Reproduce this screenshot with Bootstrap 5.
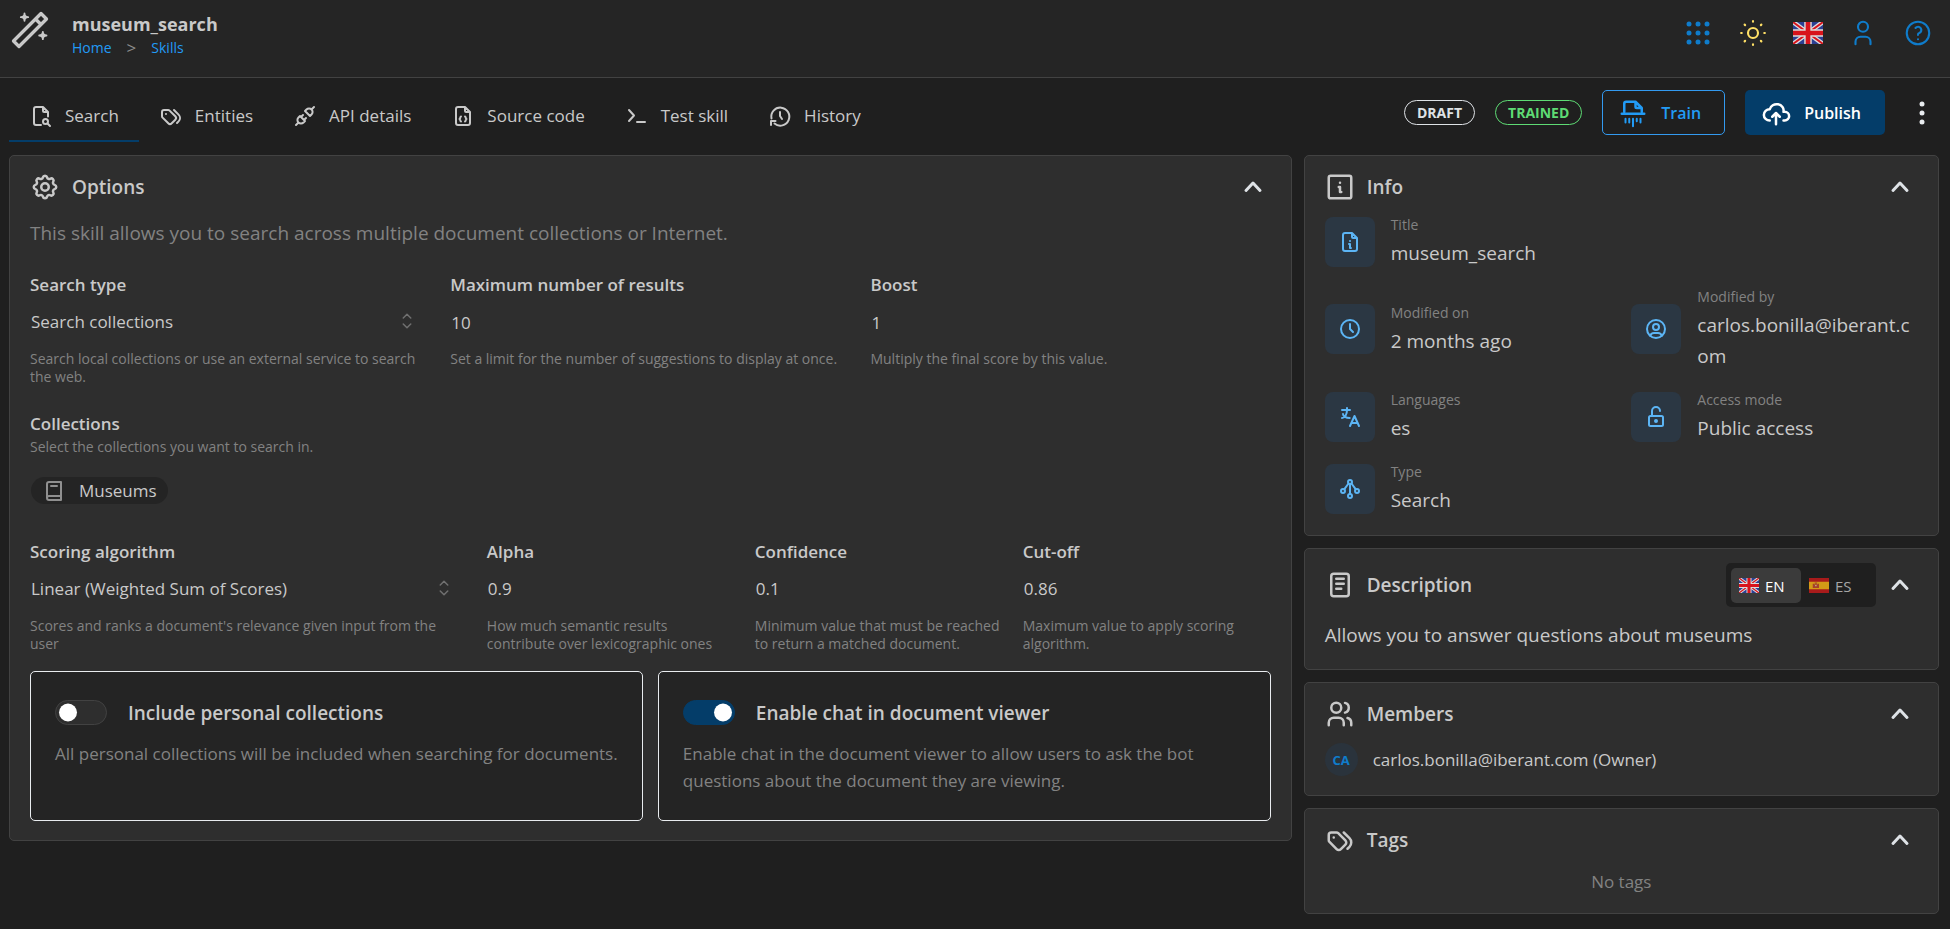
<!DOCTYPE html>
<html lang="en" data-bs-theme="dark">
<head>
<meta charset="utf-8">
<meta name="viewport" content="width=device-width, initial-scale=1">
<title>museum_search</title>
<link href="https://cdn.jsdelivr.net/npm/bootstrap@5.3.0/dist/css/bootstrap.min.css" rel="stylesheet">
<style>
:root { --text: #c9c9c9; --dim: #828282; --panel: #2e2e2e; --line: #424242; --deep: #242424; --navy: #043d69; --link: #229bf5; --blue: #0f7ccb; }
body { background: #1f1f1f; color: var(--text); font-family: "Open Sans", "Noto Sans", sans-serif; font-size: 17px; line-height: 24px; }
h1, h2, h3 { color: var(--text); }
.ico { width: 24px; height: 24px; fill: none; stroke: currentColor; stroke-width: 2; stroke-linecap: round; stroke-linejoin: round; flex: none; }
.ico-lg { width: 30px; height: 30px; }
.ico-app { width: 44px; height: 44px; stroke-width: 1.8; }
.plain { background: none; border: 0; padding: 0; color: inherit; line-height: 0; }
.topbar { background: #252525; border-bottom: 1px solid var(--line); height: 78px; padding: 8px 17px 0 8px; }
.topbar .app-name { font-size: 18px; font-weight: 700; line-height: 24px; margin: 4px 0 0; }
.crumbs { font-size: 14px; line-height: 24px; gap: 15px; }
.crumbs a { color: var(--link); text-decoration: none; }
.crumbs span { font-size: 17px; color: #8c8c8c; }
.top-actions { gap: 25px; color: var(--blue); height: 50px; }
.top-actions .ico { stroke-width: 1.7; }
.toolbar { padding: 12px 11px 12px 9px; min-height: 77px; }
.tab-link { display: flex; align-items: center; gap: 12px; height: 52px; padding: 2px 20px 0; color: var(--text); text-decoration: none; border-bottom: 2px solid transparent; font-size: 17px; }
.tab-link.active { border-color: var(--navy); }
.tab-link:hover { color: #fff; }
.actions { gap: 20px; }
.pill { border: 1px solid; border-radius: 13px; height: 25px; line-height: 23px; padding: 0 12px; font-size: 14px; font-weight: 700; }
.pill-draft { color: #dee2e6; }
.pill-ok { color: #5edb74; }
.act { height: 45px; border-radius: 5px; font-size: 16px; font-weight: 600; padding: 0 23px 0 15px; display: flex; align-items: center; gap: 13px; }
.act-train { color: var(--link); border: 1px solid #339af0; }
.act-publish { color: #fff; background: var(--navy); }
.content { padding: 0 11px 12px 9px; }
.content > .row { --bs-gutter-x: 12px; }
.panel { background: var(--panel); border: 1px solid var(--line); border-radius: 5px; padding: 16px 20px 19px; }
.panel + .panel { margin-top: 12px; }
.panel-head { height: 30px; gap: 12px; padding-right: 6px; }
.panel-head h2 { font-size: 19px; font-weight: 600; line-height: 30px; margin: 0; }
.panel-head .plain { color: #dee2e6; }
.panel-head .plain .ico { stroke-width: 3; }
.panel-tall { padding-top: 21px; }
.lede { font-size: 19px; line-height: 30px; color: var(--dim); margin: 16px 0 22px; }
.summary { font-size: 19px; line-height: 30px; margin: 20px 0 0; }
.fields { display: grid; gap: 20px; }
.fields-3 { grid-template-columns: repeat(3, 1fr); margin-bottom: 24px; }
.fields-4 { grid-template-columns: 437fr 248fr 248fr 248fr; margin: 32px 0 18px; }
.fields label { display: block; font-size: 17px; font-weight: 600; line-height: 30px; }
.group-title { font-size: 17px; font-weight: 600; line-height: 28px; margin: 0; }
.fields input, .fields select { appearance: none; display: block; width: 100%; height: 44px; background: none; border: 0; padding: 0 1px; color: var(--text); font-size: 17px; }
.fields option { background: var(--panel); }
.pick { position: relative; }
.pick .ico { position: absolute; right: 14px; top: 12px; width: 18px; height: 18px; color: #707070; pointer-events: none; }
.hint { font-size: 14px; line-height: 18px; color: var(--dim); margin: 6px 0 0; }
.chips { margin-top: 21px; line-height: 16px; }
.chip { display: inline-flex; align-items: center; gap: 13px; height: 27px; border-radius: 14px; background: var(--deep); padding: 0 11px; margin-left: 1px; }
.chip .ico { color: #909090; }
.opts { gap: 15px; }
.opt-box { background: var(--deep); border: 1px solid #e9ecef; border-radius: 5px; padding: 26px 16px 24px 24px; min-height: 150px; }
.opt-box .form-check { display: flex; align-items: center; gap: 21px; padding: 0; margin: 0; min-height: 30px; }
.opt-box .form-check-input { width: 52px; height: 25px; margin: 0; flex: none; background-color: var(--panel); border: 1px solid var(--line); background-size: 25px 25px; background-image: url("data:image/svg+xml,%3csvg xmlns='http://www.w3.org/2000/svg' viewBox='0 0 25 25'%3e%3ccircle cx='12' cy='12.5' r='9' fill='%23fff'/%3e%3c/svg%3e") !important; background-position: left center; }
.opt-box .form-check-input:checked { background-color: var(--navy); border-color: var(--navy); background-position: right -2px center; }
.opt-box .form-check-label { font-size: 19px; font-weight: 600; line-height: 30px; }
.opt-box p { color: var(--dim); font-size: 17px; line-height: 27px; margin: 12px 0 0; }
.facts { display: grid; grid-template-columns: 1fr 1fr; gap: 17px 20px; margin-top: 12px; }
.fact { display: flex; align-items: center; gap: 16px; min-width: 0; }
.fact-wide { grid-column: 1 / -1; }
.fact dt { font-weight: 400; font-size: 14px; line-height: 22px; margin-bottom: 2px; color: var(--dim); }
.fact dd { margin: 0; font-size: 19px; line-height: 31px; word-break: break-all; }
.tile { width: 50px; height: 50px; border-radius: 8px; background: #2b3743; color: #5cb5f5; display: flex; align-items: center; justify-content: center; flex: none; }
.seg { background: #1f1f1f; border-radius: 5px; padding: 5px; width: 150px; height: 44px; }
.seg label { display: flex; align-items: center; gap: 6px; width: 70px; height: 35px; padding-left: 8px; border-radius: 5px; font-size: 15px; line-height: 20px; color: #a6a6a6; }
.seg .btn-check:checked + label { background: #3b3b3b; color: #fff; }
.avatar { width: 33px; height: 33px; border-radius: 50%; background: #2a333c; color: #0f7ccb; font-size: 13px; font-weight: 700; display: flex; align-items: center; justify-content: center; }
.member { gap: 15px; margin-top: 14px; }
.no-tags { color: var(--dim); margin: 15px 0 0; }
</style>
</head>
<body>
<svg class="d-none" aria-hidden="true">
  <defs>
    <symbol id="wand" viewBox="0 0 24 24"><path d="M6 21l15-15-3-3-15 15 3 3M15 6l3 3"/><path fill="currentColor" stroke-width="1" d="M9 3a2 2 0 0 0 2 2 2 2 0 0 0-2 2 2 2 0 0 0-2-2 2 2 0 0 0 2-2M19 13a2 2 0 0 0 2 2 2 2 0 0 0-2 2 2 2 0 0 0-2-2 2 2 0 0 0 2-2"/></symbol>
    <symbol id="file-search" viewBox="0 0 24 24"><path d="M14 3v4a1 1 0 0 0 1 1h4M12 21H7a2 2 0 0 1-2-2V5a2 2 0 0 1 2-2h7l5 5v4.5M18.5 19.5L21 22"/><circle cx="16.5" cy="17.5" r="2.5"/></symbol>
    <symbol id="tags" viewBox="0 0 24 24"><path d="M3 8v4.172a2 2 0 0 0 .586 1.414l5.71 5.71a2.41 2.41 0 0 0 3.408 0l3.592-3.592a2.41 2.41 0 0 0 0-3.408l-5.71-5.71A2 2 0 0 0 9.172 6H5a2 2 0 0 0-2 2zM18 19l1.592-1.592a4.82 4.82 0 0 0 0-6.816L15 6M7 10h-.01"/></symbol>
    <symbol id="plug" viewBox="0 0 24 24"><path d="M7 12l5 5-1.500 1.500a3.536 3.536 0 1 1-5-5zM17 12l-5-5 1.500-1.500a3.536 3.536 0 1 1 5 5zM3 21l2.500-2.500M18.500 5.500L21 3M10 11l-2 2M13 14l-2 2"/></symbol>
    <symbol id="file-code" viewBox="0 0 24 24"><path d="M14 3v4a1 1 0 0 0 1 1h4M17 21H7a2 2 0 0 1-2-2V5a2 2 0 0 1 2-2h7l5 5v11a2 2 0 0 1-2 2zM10 12.500c-1 0-.5 2.500-1.500 2.500 1 0 .5 2.500 1.500 2.500M14 12.500c1 0 .5 2.500 1.500 2.500-1 0-.5 2.500-1.500 2.500"/></symbol>
    <symbol id="prompt" viewBox="0 0 24 24"><path d="M4 6l5 5.500-5 5.500M12 18h8"/></symbol>
    <symbol id="history" viewBox="0 0 24 24"><path d="M3.500 14.500A9 9 0 1 1 6.500 19.500M3 21v-4h4.500M12 8v4l2 3"/></symbol>
    <symbol id="sun" viewBox="0 0 24 24"><circle cx="12" cy="12" r="4"/><path d="M12 2.500v.5M12 21v.5M2.500 12H3M21 12h.5M5.300 5.300l.4.4M18.300 18.300l.4.4M5.300 18.700l.4-.4M18.300 5.700l.4-.4"/></symbol>
    <symbol id="user" viewBox="0 0 24 24"><circle cx="12" cy="7" r="4"/><path d="M6 21v-2a4 4 0 0 1 4-4h4a4 4 0 0 1 4 4v2"/></symbol>
    <symbol id="help" viewBox="0 0 24 24"><circle cx="12" cy="12" r="9"/><path d="M12 17v.01M12 13.500a1.500 1.500 0 0 1 1-1.500 2.600 2.600 0 1 0-3-4"/></symbol>
    <symbol id="gear" viewBox="0 0 24 24"><path d="M10.325 4.317c.426-1.756 2.924-1.756 3.350 0a1.724 1.724 0 0 0 2.573 1.066c1.543-.94 3.310.826 2.370 2.370a1.724 1.724 0 0 0 1.065 2.572c1.756.426 1.756 2.924 0 3.350a1.724 1.724 0 0 0-1.066 2.573c.94 1.543-.826 3.310-2.370 2.370a1.724 1.724 0 0 0-2.572 1.065c-.426 1.756-2.924 1.756-3.350 0a1.724 1.724 0 0 0-2.573-1.066c-1.543.94-3.310-.826-2.370-2.370a1.724 1.724 0 0 0-1.065-2.572c-1.756-.426-1.756-2.924 0-3.350a1.724 1.724 0 0 0 1.066-2.573c-.94-1.543.826-3.310 2.370-2.370 1 .608 2.296.07 2.572-1.065z"/><circle cx="12" cy="12" r="3"/></symbol>
    <symbol id="info" viewBox="0 0 24 24"><rect x="3" y="3" width="18" height="18" rx="1.500"/><path d="M12 8.500h.01M11 12h1v4h1"/></symbol>
    <symbol id="shredder" viewBox="0 0 24 24"><path d="M5 11V4.500A1.500 1.500 0 0 1 6.500 3H14l5 5v3M14 3v4a1 1 0 0 0 1 1h4M3 12.500h18"/><path stroke-width="1.600" d="M6 16.500v3M9 16.500v3M12 16.500v6M15 16.500v2M18 16.500v3"/></symbol>
    <symbol id="cloud-up" viewBox="0 0 24 24"><path d="M7 18a4.600 4.400 0 0 1 0-9 5 4.500 0 0 1 11 2h1a3.500 3.500 0 0 1 0 7h-1M9 15l3-3 3 3M12 12v9"/></symbol>
    <symbol id="up" viewBox="0 0 24 24"><path d="M5 15.500l7-7.500 7 7.500"/></symbol>
    <symbol id="updown" viewBox="0 0 24 24"><path d="M7 8l5-5 5 5M7 16l5 5 5-5"/></symbol>
    <symbol id="book" viewBox="0 0 24 24"><path d="M19 21H7a2 2 0 0 1-2-2V5a2 2 0 0 1 2-2h12v18M19 17H7a2 2 0 0 0-2 2M9 7h6"/></symbol>
    <symbol id="file-info" viewBox="0 0 24 24"><path d="M14 3v4a1 1 0 0 0 1 1h4M17 21H7a2 2 0 0 1-2-2V5a2 2 0 0 1 2-2h7l5 5v11a2 2 0 0 1-2 2zM11 14h1v4h1M12 11h.01"/></symbol>
    <symbol id="clock" viewBox="0 0 24 24"><circle cx="12" cy="12" r="9"/><path d="M12 7v5l3 3"/></symbol>
    <symbol id="user-circle" viewBox="0 0 24 24"><circle cx="12" cy="12" r="9"/><circle cx="12" cy="10" r="3"/><path d="M6.168 18.849A4 4 0 0 1 10 16h4a4 4 0 0 1 3.834 2.855"/></symbol>
    <symbol id="language" viewBox="0 0 24 24"><path d="M4 5h8M9 3v2c0 4.418-2.239 8-5 8M5 9c0 2.144 2.952 3.908 6.700 4M12 21l4.500-10L21 21M19.500 18h-6"/></symbol>
    <symbol id="lock-open" viewBox="0 0 24 24"><rect x="5" y="11" width="14" height="10" rx="1.500"/><circle cx="12" cy="16" r="1"/><path d="M8 11V6a4 4 0 0 1 8 0"/></symbol>
    <symbol id="nodes" viewBox="0 0 24 24"><circle cx="12" cy="5" r="2"/><circle cx="5" cy="14" r="2"/><circle cx="19" cy="14" r="2"/><circle cx="12" cy="19" r="2"/><path d="M12 7v10M10.500 6.500l-4.300 5.800M13.500 6.500l4.300 5.800"/></symbol>
    <symbol id="notes" viewBox="0 0 24 24"><rect x="5" y="3" width="14" height="18" rx="2"/><path d="M9 7h6M9 11h6M9 15h4"/></symbol>
    <symbol id="users" viewBox="0 0 24 24"><circle cx="9" cy="7" r="4"/><path d="M3 21v-2a4 4 0 0 1 4-4h4a4 4 0 0 1 4 4v2M16 3.130a4 4 0 0 1 0 7.750M21 21v-2a4 4 0 0 0-3-3.850"/></symbol>
    <symbol id="flag-gb" viewBox="0 0 32 24" preserveAspectRatio="none"><path fill="#2b3f92" d="M0 0h32v24H0z"/><path stroke="#ddd" stroke-width="5" d="M0 0l32 24M32 0L0 24"/><path stroke="#d8141c" stroke-width="2" d="M0 0l32 24M32 0L0 24"/><path stroke="#ddd" stroke-width="8" d="M16 0v24M0 12h32"/><path stroke="#d8141c" stroke-width="5" d="M16 0v24M0 12h32"/></symbol>
    <symbol id="flag-es" viewBox="0 0 32 24" preserveAspectRatio="none"><path fill="#a81b1b" d="M0 0h32v24H0z"/><path fill="#d39a16" d="M0 6h32v12H0z"/><path fill="#a5402a" d="M6 9h2v7H6zM14 9h2v7h-2zM8 10h6v6H8zM9 7h4v2H9z"/><path fill="#cbb9a5" d="M10 11h2v2h-2z"/></symbol>
  </defs>
</svg>

<header class="topbar d-flex justify-content-between">
  <div class="d-flex">
    <svg class="ico ico-app"><use href="#wand"/></svg>
    <div class="ms-3 ps-1">
      <h1 class="app-name">museum_search</h1>
      <nav class="crumbs d-flex" aria-label="Breadcrumb"><a href="#">Home</a><span>&gt;</span><a href="#">Skills</a></nav>
    </div>
  </div>
  <div class="top-actions d-flex align-items-center">
    <button class="plain" aria-label="Apps"><svg width="30" height="30" viewBox="0 0 30 30" fill="currentColor"><circle cx="6" cy="6" r="2.500"/><circle cx="15" cy="6" r="2.500"/><circle cx="24" cy="6" r="2.500"/><circle cx="6" cy="15" r="2.500"/><circle cx="15" cy="15" r="2.500"/><circle cx="24" cy="15" r="2.500"/><circle cx="6" cy="24" r="2.500"/><circle cx="15" cy="24" r="2.500"/><circle cx="24" cy="24" r="2.500"/></svg></button>
    <button class="plain" aria-label="Theme"><svg class="ico ico-lg" color="#ffe066"><use href="#sun"/></svg></button>
    <button class="plain" aria-label="Language"><svg width="30" height="22"><use href="#flag-gb"/></svg></button>
    <button class="plain" aria-label="Account"><svg class="ico ico-lg"><use href="#user"/></svg></button>
    <button class="plain" aria-label="Help"><svg class="ico ico-lg"><use href="#help"/></svg></button>
  </div>
</header>

<div class="toolbar d-flex justify-content-between align-items-start">
  <nav class="d-flex" aria-label="Skill sections">
    <a class="tab-link active" href="#"><svg class="ico"><use href="#file-search"/></svg>Search</a>
    <a class="tab-link" href="#"><svg class="ico"><use href="#tags"/></svg>Entities</a>
    <a class="tab-link" href="#"><svg class="ico"><use href="#plug"/></svg>API details</a>
    <a class="tab-link" href="#"><svg class="ico"><use href="#file-code"/></svg>Source code</a>
    <a class="tab-link" href="#"><svg class="ico"><use href="#prompt"/></svg>Test skill</a>
    <a class="tab-link" href="#"><svg class="ico"><use href="#history"/></svg>History</a>
  </nav>
  <div class="actions d-flex align-items-center">
    <span class="pill pill-draft">DRAFT</span>
    <span class="pill pill-ok">TRAINED</span>
    <button class="btn act act-train"><svg class="ico ico-lg"><use href="#shredder"/></svg>Train</button>
    <button class="btn act act-publish"><svg class="ico ico-lg"><use href="#cloud-up"/></svg>Publish</button>
    <button class="plain px-1" aria-label="More"><svg width="26" height="26" viewBox="0 0 26 26" fill="#e9ecef"><circle cx="13" cy="4" r="2.500"/><circle cx="13" cy="13" r="2.500"/><circle cx="13" cy="22" r="2.500"/></svg></button>
  </div>
</div>

<main class="content">
  <div class="row">
    <div class="col-8">
      <section class="panel">
        <div class="panel-head d-flex align-items-center">
          <svg class="ico ico-lg"><use href="#gear"/></svg><h2>Options</h2>
          <button class="plain ms-auto" aria-label="Collapse"><svg class="ico"><use href="#up"/></svg></button>
        </div>
        <p class="lede">This skill allows you to search across multiple document collections or Internet.</p>
        <div class="fields fields-3">
          <div>
            <label for="stype">Search type</label>
            <div class="pick"><select id="stype"><option>Search collections</option></select><svg class="ico"><use href="#updown"/></svg></div>
            <p class="hint">Search local collections or use an external service to search the web.</p>
          </div>
          <div>
            <label for="maxres">Maximum number of results</label>
            <input id="maxres" type="text" value="10">
            <p class="hint">Set a limit for the number of suggestions to display at once.</p>
          </div>
          <div>
            <label for="boost">Boost</label>
            <input id="boost" type="text" value="1">
            <p class="hint">Multiply the final score by this value.</p>
          </div>
        </div>
        <h3 class="group-title">Collections</h3>
        <p class="hint mt-0">Select the collections you want to search in.</p>
        <div class="chips"><span class="chip"><svg class="ico"><use href="#book"/></svg>Museums</span></div>
        <div class="fields fields-4">
          <div>
            <label for="algo">Scoring algorithm</label>
            <div class="pick"><select id="algo"><option>Linear (Weighted Sum of Scores)</option></select><svg class="ico"><use href="#updown"/></svg></div>
            <p class="hint">Scores and ranks a document's relevance given input from the user</p>
          </div>
          <div>
            <label for="alpha">Alpha</label>
            <input id="alpha" type="text" value="0.9">
            <p class="hint">How much semantic results contribute over lexicographic ones</p>
          </div>
          <div>
            <label for="conf">Confidence</label>
            <input id="conf" type="text" value="0.1">
            <p class="hint">Minimum value that must be reached to return a matched document.</p>
          </div>
          <div>
            <label for="cutoff">Cut-off</label>
            <input id="cutoff" type="text" value="0.86">
            <p class="hint">Maximum value to apply scoring algorithm.</p>
          </div>
        </div>
        <div class="opts d-flex">
          <div class="opt-box flex-fill w-50">
            <div class="form-check form-switch"><input class="form-check-input" type="checkbox" role="switch" id="personal"><label class="form-check-label" for="personal">Include personal collections</label></div>
            <p>All personal collections will be included when searching for documents.</p>
          </div>
          <div class="opt-box flex-fill w-50">
            <div class="form-check form-switch"><input class="form-check-input" type="checkbox" role="switch" id="chat" checked><label class="form-check-label" for="chat">Enable chat in document viewer</label></div>
            <p>Enable chat in the document viewer to allow users to ask the bot questions about the document they are viewing.</p>
          </div>
        </div>
      </section>
    </div>
    <aside class="col-4">
      <section class="panel">
        <div class="panel-head d-flex align-items-center">
          <svg class="ico ico-lg"><use href="#info"/></svg><h2>Info</h2>
          <button class="plain ms-auto" aria-label="Collapse"><svg class="ico"><use href="#up"/></svg></button>
        </div>
        <div class="facts">
          <div class="fact fact-wide"><span class="tile"><svg class="ico"><use href="#file-info"/></svg></span><dl class="m-0"><dt>Title</dt><dd>museum_search</dd></dl></div>
          <div class="fact"><span class="tile"><svg class="ico"><use href="#clock"/></svg></span><dl class="m-0"><dt>Modified on</dt><dd>2 months ago</dd></dl></div>
          <div class="fact"><span class="tile"><svg class="ico"><use href="#user-circle"/></svg></span><dl class="m-0"><dt>Modified by</dt><dd>carlos.bonilla@iberant.com</dd></dl></div>
          <div class="fact"><span class="tile"><svg class="ico"><use href="#language"/></svg></span><dl class="m-0"><dt>Languages</dt><dd>es</dd></dl></div>
          <div class="fact"><span class="tile"><svg class="ico"><use href="#lock-open"/></svg></span><dl class="m-0"><dt>Access mode</dt><dd>Public access</dd></dl></div>
          <div class="fact fact-wide"><span class="tile"><svg class="ico"><use href="#nodes"/></svg></span><dl class="m-0"><dt>Type</dt><dd>Search</dd></dl></div>
        </div>
      </section>
      <section class="panel panel-tall">
        <div class="panel-head d-flex align-items-center">
          <svg class="ico ico-lg"><use href="#notes"/></svg><h2>Description</h2>
          <div class="seg d-flex ms-auto">
            <input class="btn-check" type="radio" name="lang" id="lang-en" checked><label for="lang-en"><svg width="20" height="15"><use href="#flag-gb"/></svg>EN</label>
            <input class="btn-check" type="radio" name="lang" id="lang-es"><label for="lang-es"><svg width="20" height="15"><use href="#flag-es"/></svg>ES</label>
          </div>
          <button class="plain" aria-label="Collapse"><svg class="ico"><use href="#up"/></svg></button>
        </div>
        <p class="summary">Allows you to answer questions about museums</p>
      </section>
      <section class="panel">
        <div class="panel-head d-flex align-items-center">
          <svg class="ico ico-lg"><use href="#users"/></svg><h2>Members</h2>
          <button class="plain ms-auto" aria-label="Collapse"><svg class="ico"><use href="#up"/></svg></button>
        </div>
        <div class="member d-flex align-items-center"><span class="avatar">CA</span><span>carlos.bonilla@iberant.com (Owner)</span></div>
      </section>
      <section class="panel">
        <div class="panel-head d-flex align-items-center">
          <svg class="ico ico-lg"><use href="#tags"/></svg><h2>Tags</h2>
          <button class="plain ms-auto" aria-label="Collapse"><svg class="ico"><use href="#up"/></svg></button>
        </div>
        <p class="no-tags text-center">No tags</p>
      </section>
    </aside>
  </div>
</main>
<script src="https://cdn.jsdelivr.net/npm/bootstrap@5.3.0/dist/js/bootstrap.bundle.min.js"></script>
</body>
</html>
